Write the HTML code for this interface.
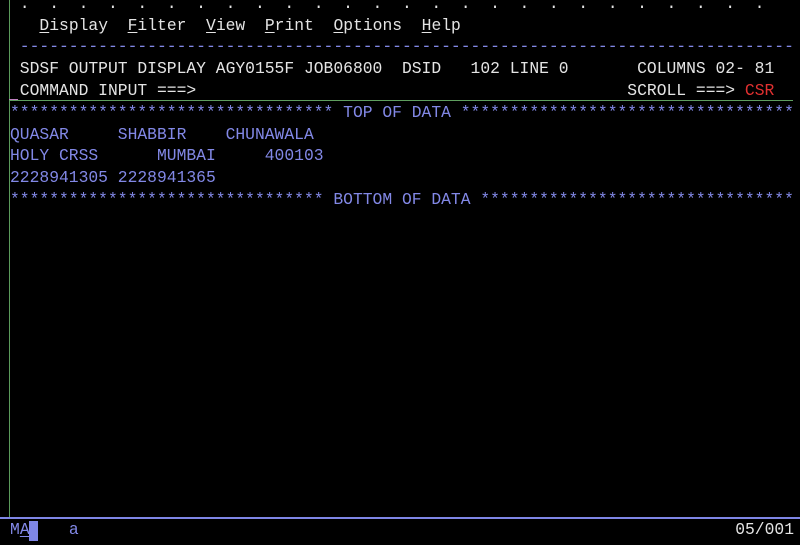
<!DOCTYPE html>
<html><head><style>
html,body{margin:0;padding:0;background:#000;width:800px;height:545px;overflow:hidden}
#s{position:absolute;left:10px;top:-7.2px;font-family:"Liberation Mono",monospace;font-size:16.33px;line-height:21.8px;white-space:pre;color:#e4e4e4}
.b{color:#8288e6}.r{color:#e03030}.w{color:#e4e4e4}
u{text-decoration:underline;text-underline-offset:2px}
#vl{position:absolute;left:9px;top:0;width:1px;height:518px;background:#5a9a5a}
#gl{position:absolute;left:9px;top:100px;width:784px;height:1px;background:#5f9f5f}
#pk{position:absolute;left:9px;top:99px;width:9px;height:1px;background:#c080c0}
#bl{position:absolute;left:0;top:517px;width:800px;height:2px;background:#7f86e6}
#st{position:absolute;left:10px;top:519px;font-family:"Liberation Mono",monospace;font-size:16.33px;line-height:22px;white-space:pre;color:#8288e6;width:784px}
#cur{position:absolute;left:29px;top:521px;width:9px;height:20px;background:#7f86e6}
</style></head><body>
<div id="vl"></div><div id="gl"></div><div id="pk"></div>
<div id="s"><span class="w"> .  .  .  .  .  .  .  .  .  .  .  .  .  .  .  .  .  .  .  .  .  .  .  .  .  . </span>
   <u>D</u>isplay  <u>F</u>ilter  <u>V</u>iew  <u>P</u>rint  <u>O</u>ptions  <u>H</u>elp
<span class="b"> -------------------------------------------------------------------------------</span>
 SDSF OUTPUT DISPLAY AGY0155F JOB06800  DSID   102 LINE 0       COLUMNS 02- 81
 COMMAND INPUT ===>                                            SCROLL ===> <span class="r">CSR</span>
<span class="b">********************************* TOP OF DATA **********************************
QUASAR     SHABBIR    CHUNAWALA
HOLY CRSS      MUMBAI     400103
2228941305 2228941365
******************************** BOTTOM OF DATA ********************************</span></div>
<div id="bl"></div>
<div id="cur"></div>
<div id="st">M<u>A</u>    a<span style="position:absolute;right:0;color:#e4e4e4">05/001</span></div>
</body></html>
